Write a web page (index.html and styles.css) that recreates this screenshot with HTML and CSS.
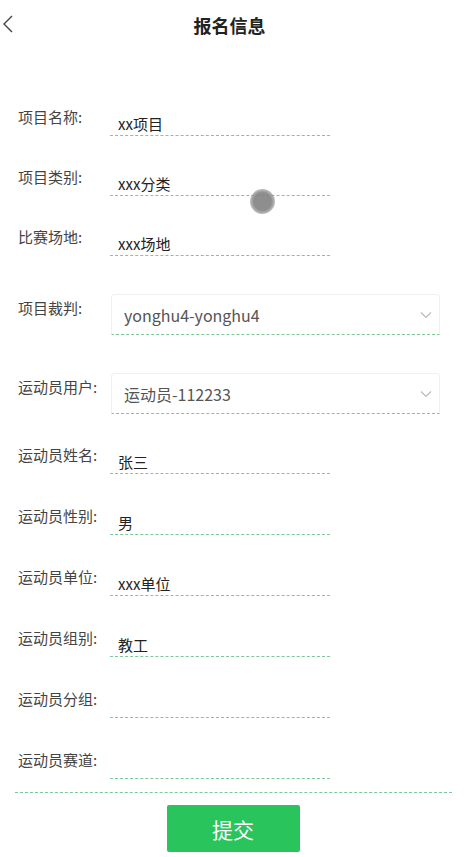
FILE: index.html
```html
<!DOCTYPE html>
<html lang="zh-CN">
<head>
<meta charset="utf-8">
<title>报名信息</title>
<link rel="stylesheet" href="styles.css">
</head>
<body>
<div class="page">
  <header class="header">
    <span class="back">
      <svg width="14" height="20" viewBox="0 0 14 20"><path d="M11 2 L3 10 L11 18" fill="none" stroke="#444" stroke-width="1.4"/></svg>
    </span>
    <h1 class="title">报名信息</h1>
  </header>

  <form class="form">
    <div class="row">
      <label class="label">项目名称:</label>
      <div class="field"><span class="value">xx项目</span></div>
    </div>
    <div class="row">
      <label class="label">项目类别:</label>
      <div class="field"><span class="value">xxx分类</span></div>
    </div>
    <div class="row">
      <label class="label">比赛场地:</label>
      <div class="field"><span class="value">xxx场地</span></div>
    </div>
    <div class="row row-select">
      <label class="label">项目裁判:</label>
      <div class="select"><span class="select-text">yonghu4-yonghu4</span>
        <svg class="chev" width="12" height="8" viewBox="0 0 12 8"><path d="M1 1.5 L6 6.5 L11 1.5" fill="none" stroke="#bbb" stroke-width="1.2"/></svg>
      </div>
    </div>
    <div class="row row-select">
      <label class="label">运动员用户:</label>
      <div class="select"><span class="select-text">运动员-112233</span>
        <svg class="chev" width="12" height="8" viewBox="0 0 12 8"><path d="M1 1.5 L6 6.5 L11 1.5" fill="none" stroke="#bbb" stroke-width="1.2"/></svg>
      </div>
    </div>
    <div class="row row-lower">
      <label class="label">运动员姓名:</label>
      <div class="field"><span class="value">张三</span></div>
    </div>
    <div class="row row-lower">
      <label class="label">运动员性别:</label>
      <div class="field"><span class="value">男</span></div>
    </div>
    <div class="row row-lower">
      <label class="label">运动员单位:</label>
      <div class="field"><span class="value">xxx单位</span></div>
    </div>
    <div class="row row-lower">
      <label class="label">运动员组别:</label>
      <div class="field"><span class="value">教工</span></div>
    </div>
    <div class="row row-lower">
      <label class="label">运动员分组:</label>
      <div class="field"><span class="value"></span></div>
    </div>
    <div class="row row-lower row-last">
      <label class="label">运动员赛道:</label>
      <div class="field"><span class="value"></span></div>
    </div>
    <div class="divider"></div>
    <div class="actions">
      <button type="button" class="submit">提交</button>
    </div>
  </form>
  <span class="touch"></span>
</div>
</body>
</html>
```
FILE: styles.css
```css
* { box-sizing: border-box; }
html, body { margin: 0; padding: 0; background: #fff; }
body {
  font-family: "Noto Sans CJK SC", "Noto Sans", sans-serif;
  color: #333;
}
.page { position: relative; width: 464px; height: 857px; overflow: hidden; }
.header {
  height: 50px;
  display: flex;
  align-items: center;
  justify-content: center;
  position: relative;
}
.back { position: absolute; left: 1px; top: 14px; display: flex; }
.title {
  margin: 0 0 0 -5px;
  font-size: 18px;
  font-weight: 700;
  color: #222;
  line-height: 24px;
}
.form {
  padding: 56px 0 0 0;
  display: flex;
  flex-direction: column;
}
.row {
  display: flex;
  align-items: flex-start;
  padding-left: 18px;
  margin-bottom: 30px;
}
.row-lower { margin-bottom: 31px; }
.label {
  width: 92px;
  flex: none;
  font-size: 15px;
  line-height: 20px;
  padding-top: 1px;
  color: #444;
}
.field {
  width: 220px;
  height: 30px;
  border-bottom: 1px dashed #7fc79a;
  padding: 8px 0 0 8px;
  font-size: 15px;
  line-height: 20px;
  color: #222;
}
.row-select { margin-top: 8px; margin-bottom: 30px; }
.row-select .label { padding-top: 4px; }
.select {
  width: 329px;
  height: 41px;
  border: 1px solid #f0f0f0;
  border-bottom: 1px dashed #7fc79a;
  border-radius: 4px 4px 0 0;
  display: flex;
  align-items: center;
  justify-content: space-between;
  padding: 0 7px 0 12px;
  margin-left: 1px;
}
.select-text { font-size: 16px; color: #555; line-height: 22px; }
.chev { flex: none; }
.row-last { margin-bottom: 13px; }
.divider {
  margin: 0 12px 0 15px;
  border-top: 1px dashed #7fc79a;
}
.actions { display: flex; justify-content: center; padding-top: 12px; }
.submit {
  width: 133px;
  height: 47px;
  border: none;
  border-radius: 2px;
  background: #2ac45c;
  color: #fff;
  font-family: inherit;
  font-size: 21px;
  margin-left: 2px;
}
.touch {
  position: absolute;
  left: 250px;
  top: 189px;
  width: 25px;
  height: 25px;
  border-radius: 50%;
  background: radial-gradient(circle, rgba(130,130,130,0.9) 50%, rgba(150,150,150,0.5) 75%, rgba(200,200,200,0) 100%);
}
```
